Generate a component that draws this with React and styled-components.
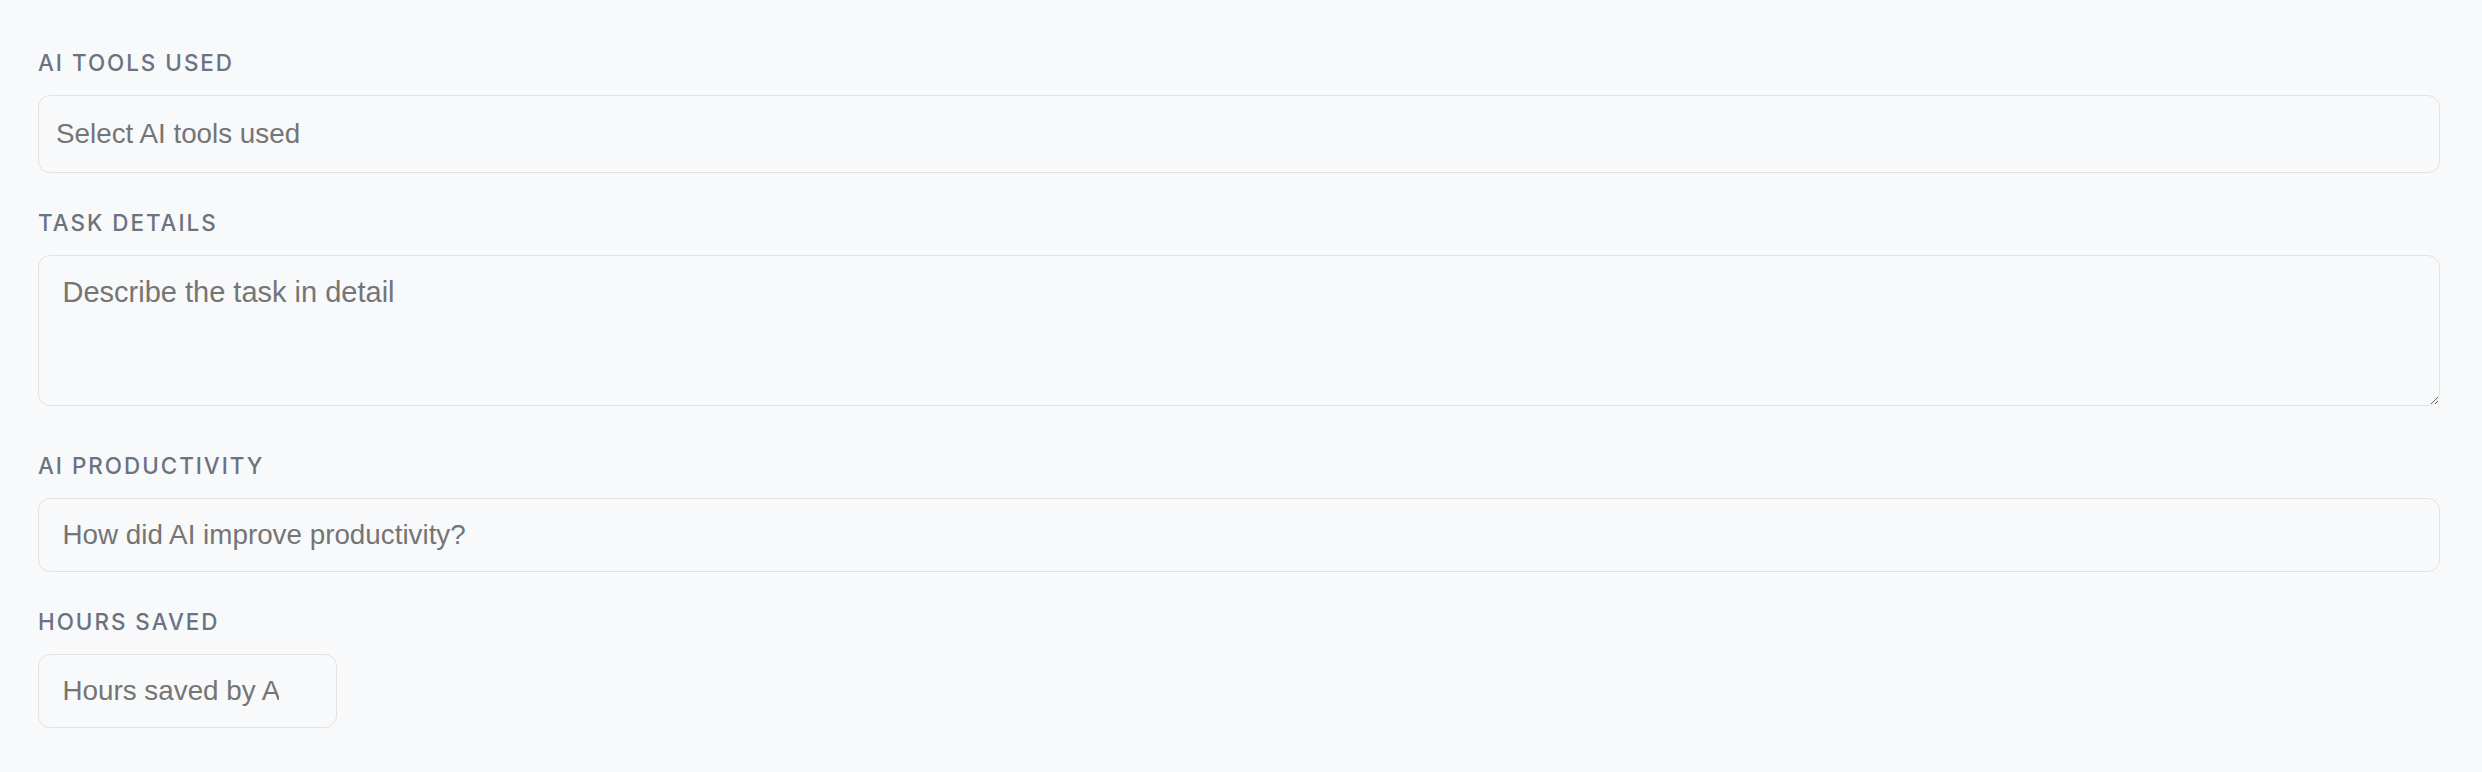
import styled, { createGlobalStyle } from 'styled-components';

const GlobalStyle = createGlobalStyle`
  html, body {
    margin: 0;
    padding: 0;
    background: #f8f9fa;
  }
`;

export default function App() {
  return (
    <>
      <GlobalStyle />
      <Form>
        <Field>
          <Label>AI Tools Used</Label>
          <TextInput $compact placeholder="Select AI tools used" />
        </Field>
        <Field $extra>
          <Label>Task Details</Label>
          <TextArea placeholder="Describe the task in detail" />
        </Field>
        <Field>
          <Label>AI Productivity</Label>
          <TextInput placeholder="How did AI improve productivity?" />
        </Field>
        <Field>
          <Label>Hours Saved</Label>
          <TextInput $narrow placeholder="Hours saved by AI" />
        </Field>
      </Form>
    </>
  );
}

const Form = styled.form`
  display: flex;
  flex-direction: column;
  gap: 36px;
  padding: 49px 42px 40px 38px;
  min-height: 772px;
  box-sizing: border-box;
  background: #f8f9fa;
`;

const Field = styled.div`
  display: flex;
  flex-direction: column;
  align-items: flex-start;
  margin-bottom: ${p => (p.$extra ? '10px' : '0')};
`;

const Label = styled.label`
  display: block;
  margin-bottom: 19px;
  font-family: Inter, 'Noto Sans', sans-serif;
  font-size: 22.4px;
  line-height: 27px;
  font-weight: 500;
  letter-spacing: 2px;
  text-transform: uppercase;
  color: #6b7280;
`;

const fieldBase = `
  box-sizing: border-box;
  border: 1.5px solid #e4e2df;
  border-radius: 12px;
  background: #f8f9fa;
  font-family: 'Liberation Sans', Arial, sans-serif;
  font-size: 27.8px;
  color: #374151;
  outline: none;

  &::placeholder {
    color: #757575;
  }
`;

const TextInput = styled.input`
  ${fieldBase}
  display: block;
  width: ${p => (p.$narrow ? '299px' : '100%')};
  height: ${p => (p.$compact ? '78px' : '74px')};
  padding: ${p => (p.$compact ? '0 17px' : p.$narrow ? '0 57px 0 23.5px' : '0 23.5px')};
`;

const TextArea = styled.textarea`
  ${fieldBase}
  display: block;
  width: 100%;
  height: 151px;
  padding: 20px 23.5px;
  font-size: 29px;
  line-height: normal;
  resize: vertical;
`;
